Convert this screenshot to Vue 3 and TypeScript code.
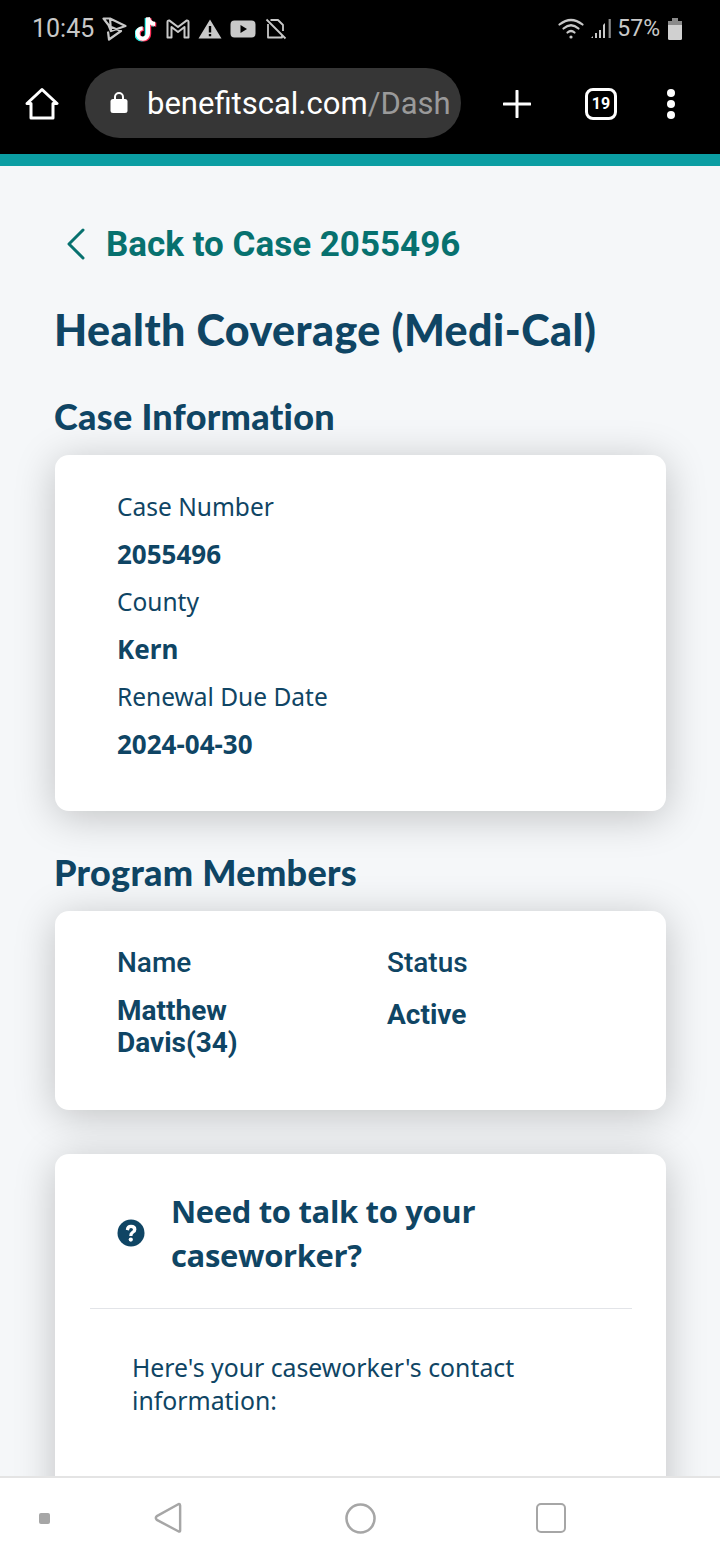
<script setup lang="ts">
const caseRows: { text: string; strong: boolean }[] = [
  { text: 'Case Number', strong: false },
  { text: '2055496', strong: true },
  { text: 'County', strong: false },
  { text: 'Kern', strong: true },
  { text: 'Renewal Due Date', strong: false },
  { text: '2024-04-30', strong: true },
]
</script>

<template>
  <div class="phone">
    <header class="chrome">
      <div class="status">
        <div class="status-left">
          <span class="time">10:45</span>
          <svg class="si" width="25" height="24" viewBox="0 0 25 24" fill="none" stroke="#c8c8c8" stroke-width="2.2" stroke-linejoin="round"><path d="M1.5 1.5 L8 1.5 L23.5 9 L9 14 L6.5 8 Z M8 1.5 L9 14 M8 9.5 L19 14 L7 22.5 L6 14.5"/></svg>
          <svg class="si" width="23" height="28" viewBox="0 0 24 28" fill="none"><g stroke-width="4.4" stroke-linecap="butt" fill="none"><path d="M13.5 2 V18.5 A5.4 5.4 0 1 1 8 13.2" stroke="#25f4ee" transform="translate(-1.2 .8)"/><path d="M13.5 2 C14 6 17 8.5 21 8.6" stroke="#25f4ee" transform="translate(-1.2 .8)"/><path d="M13.5 2 V18.5 A5.4 5.4 0 1 1 8 13.2" stroke="#fe2c55" transform="translate(1.2 .8)"/><path d="M13.5 2 C14 6 17 8.5 21 8.6" stroke="#fe2c55" transform="translate(1.2 .8)"/><path d="M13.5 2 V18.5 A5.4 5.4 0 1 1 8 13.2" stroke="#fff"/><path d="M13.5 2 C14 6 17 8.5 21 8.6" stroke="#fff"/></g></svg>
          <svg class="si" width="24" height="20" viewBox="0 0 24 20" fill="none" stroke="#c8c8c8" stroke-width="2" stroke-linejoin="round"><path d="M1.5 18.5 V3 Q1.5 1.2 3.5 1.6 L12 8 L20.5 1.6 Q22.5 1.2 22.5 3 V18.5 H18.5 V8 L12 13 L5.5 8 V18.5 Z"/></svg>
          <svg class="si" width="24" height="20" viewBox="0 0 24 20"><path fill="#c8c8c8" fill-rule="evenodd" d="M12 0.5 L23.5 19.5 H0.5 Z M10.8 7 V13.5 H13.2 V7 Z M10.8 15 V17.3 H13.2 V15 Z"/></svg>
          <svg class="si" width="26" height="20" viewBox="0 0 26 20"><path fill="#c8c8c8" fill-rule="evenodd" d="M4.5 1.5 H21.5 Q25.5 1.5 25.5 5.5 V14.5 Q25.5 18.5 21.5 18.5 H4.5 Q0.5 18.5 0.5 14.5 V5.5 Q0.5 1.5 4.5 1.5 Z M10.5 6 V14 L17 10 Z"/></svg>
          <svg class="si sim" width="22" height="22" viewBox="0 0 22 22" fill="none" stroke="#c8c8c8" stroke-width="1.8" stroke-linejoin="round"><path d="M3 6 V19.5 H17 V17 M5.5 2 H13 L18 7 V13 M1.5 1.5 L20.5 20.5"/></svg>
        </div>
        <div class="status-right">
          <svg width="26" height="24" viewBox="0 0 26 24" fill="none" stroke="#c8c8c8" stroke-width="2.2" stroke-linecap="round"><path d="M1.5 7.5 Q13 -1.5 24.5 7.5 M5.5 11.5 Q13 5 20.5 11.5 M9.5 15.5 Q13 12.5 16.5 15.5"/><circle cx="13" cy="20" r="1.6" fill="#c8c8c8" stroke="none"/></svg>
          <svg width="22" height="22" viewBox="0 0 22 22" fill="#c8c8c8"><path d="M1 20 L3 18 V20 Z M5 15 H7 V20 H5 Z M9 12 H11 V20 H9 Z M13 7 L15 5 V20 H13 Z" /><rect x="18.6" y="1" width="2.2" height="19" fill="#8a8a8a"/></svg>
          <span class="pct">57%</span>
          <svg width="14" height="22" viewBox="0 0 14 22"><rect x="4" y="0" width="6" height="3" fill="#8a8a8a"/><rect x="0" y="3" width="14" height="4" fill="#8a8a8a"/><path d="M0 7 H14 V20.5 Q14 22 12.5 22 H1.5 Q0 22 0 20.5 Z" fill="#d0d0d0"/></svg>
        </div>
      </div>
      <div class="toolbar">
        <svg class="home" width="34" height="34" viewBox="0 0 34 34" fill="none" stroke="#fff" stroke-width="3" stroke-linejoin="round" stroke-linecap="round"><path d="M2 16.5 L17 2.5 L32 16.5 H28 V31 H6 V16.5 Z"/></svg>
        <div class="urlbar">
          <svg class="lock" width="18" height="23" viewBox="0 0 18 23"><path fill="none" stroke="#fff" stroke-width="2" d="M5 9 V6 A4 4 0 0 1 13 6 V9"/><rect x="0.5" y="8" width="17" height="14" rx="2.5" fill="#fff"/></svg>
          <span class="url">benefitscal.com<span class="url-dim">/Dash</span></span>
        </div>
        <svg class="plus" width="28" height="28" viewBox="0 0 28 28" stroke="#fff" stroke-width="3" stroke-linecap="round"><path d="M14 1 V27 M1 14 H27"/></svg>
        <span class="tabs">19</span>
        <div class="dots"><i></i><i></i><i></i></div>
      </div>
      <div class="teal"></div>
    </header>

    <main class="content">
      <a class="back">
        <svg width="20" height="32" viewBox="0 0 20 32" fill="none" stroke="#07716f" stroke-width="3" stroke-linecap="round" stroke-linejoin="round"><path d="M17 2 L3 16 L17 30"/></svg>
        <span>Back to Case 2055496</span>
      </a>
      <h1>Health Coverage (Medi-Cal)</h1>
      <h2>Case Information</h2>
      <section class="card case-card">
        <p v-for="row in caseRows" :key="row.text" :class="row.strong ? 'val' : 'lab'">{{ row.text }}</p>
      </section>
      <h2 class="members-h">Program Members</h2>
      <section class="card members">
        <div class="col">
          <div class="th">Name</div>
          <div class="td">Matthew<br />Davis(34)</div>
        </div>
        <div class="col">
          <div class="th">Status</div>
          <div class="td active">Active</div>
        </div>
      </section>
      <section class="card help">
        <div class="help-head">
          <svg width="28" height="28" viewBox="0 0 28 28"><circle cx="14" cy="14" r="13.5" fill="#0f4564"/><path d="M8.8 10.8 Q9.2 5.8 14 5.8 Q19.4 5.8 19.4 10.4 Q19.4 12.9 16.9 14.3 Q15.4 15.2 15.4 17 H12.2 Q12.2 14 14.3 12.6 Q16 11.6 16 10.6 Q16 9 14 9 Q12.3 9 12 11.4 Z" fill="#fff"/><circle cx="13.8" cy="20.6" r="2.1" fill="#fff"/></svg>
          <h3>Need to talk to your caseworker?</h3>
        </div>
        <div class="help-body">Here's your caseworker's contact information:</div>
      </section>
    </main>

    <nav class="navbar">
      <span class="recent-dot"></span>
      <svg class="nb" width="28" height="32" viewBox="0 0 30 34" fill="none" stroke="#a6a6a6" stroke-width="2.6" stroke-linejoin="round"><path d="M27 2 Q28 2 28 3.5 V30.5 Q28 32 26.5 31.5 L3 19 Q1 17 3 15 L26 2.2 Z"/></svg>
      <svg class="nc" width="31" height="31" viewBox="0 0 32 32" fill="none" stroke="#a6a6a6" stroke-width="2.6"><circle cx="16" cy="16" r="14.5"/></svg>
      <span class="square"></span>
    </nav>
  </div>
</template>

<style>
html, body { margin: 0; padding: 0; background: #f5f7f9; }
</style>

<style scoped>
.phone { width: 720px; height: 1560px; display: flex; flex-direction: column; overflow: hidden; background: #f5f7f9; }
.chrome { background: #000; flex: none; }
.status { height: 54px; display: flex; justify-content: space-between; align-items: center; padding: 3px 38px 0 32px; box-sizing: border-box; }
.status-left, .status-right { display: flex; align-items: center; }
.status-left { gap: 8px; }
.status-right { gap: 6px; }
.si { flex: none; }
.sim { margin-left: 1px; }
.time, .pct { font-family: Roboto, sans-serif; font-size: 25px; color: #c8c8c8; }
.pct { font-size: 23px; margin-left: -1px; margin-right: 2px; }
.toolbar { height: 100px; display: flex; align-items: center; padding-left: 25px; box-sizing: border-box; padding-bottom: 1px; }
.home, .plus { flex: none; }
.urlbar { flex: none; margin-left: 26px; width: 376px; height: 70px; border-radius: 35px; background: #363636; display: flex; align-items: center; padding-left: 25px; box-sizing: border-box; gap: 19px; margin-top: -2px; overflow: hidden; }
.lock { flex: none; }
.url { font-family: Roboto, sans-serif; font-size: 31px; color: #fff; white-space: nowrap; padding-top: 1px; }
.url-dim { color: #9a9a9a; }
.plus { margin-left: 42px; }
.tabs { flex: none; margin-left: 54px; width: 32px; height: 32px; border: 3px solid #fff; border-radius: 8px; box-sizing: border-box; color: #fff; font-family: Roboto, sans-serif; font-weight: 700; font-size: 16px; display: flex; align-items: center; justify-content: center; }
.dots { margin-left: 50px; display: flex; flex-direction: column; gap: 3px; }
.dots i { display: block; width: 8px; height: 8px; border-radius: 50%; background: #fff; }
.teal { height: 12px; background: #0b9ea3; }
.content { flex: 1; min-height: 0; overflow: hidden; padding: 0 54px 0 55px; box-sizing: border-box; }
.back { display: flex; align-items: center; gap: 20px; margin: 60px 0 0 11px; height: 36px; color: #07716f; font-family: Roboto, sans-serif; font-weight: 700; font-size: 35px; }
.back svg { flex: none; }
h1 { margin: 42px 0 0 -1px; font-family: Lato, sans-serif; font-weight: 900; font-size: 43px; line-height: 52px; color: #0f4564; letter-spacing: 0.45px; white-space: nowrap; }
h2 { margin: 40px 0 0 -1px; font-family: Lato, sans-serif; font-weight: 900; font-size: 36px; line-height: 40px; color: #0f4564; letter-spacing: 0.3px; }
.card { background: #fff; border-radius: 14px; box-shadow: 0 6px 40px rgba(0, 0, 0, 0.22); }
.case-card { margin-top: 19px; height: 356px; box-sizing: border-box; padding: 28px 62px 0; }
.case-card p { margin: 0; height: 47.6px; line-height: 47.6px; color: #0f4564; }
.lab { font-family: "Noto Sans", sans-serif; font-size: 24.5px; }
.val { font-family: "Noto Sans", sans-serif; font-weight: 700; font-size: 26px; }
.members-h { margin-top: 41px; }
.members { margin-top: 19px; height: 199px; box-sizing: border-box; padding: 33px 62px 0; display: flex; font-family: Roboto, sans-serif; color: #0f4564; font-size: 28px; }
.col { flex: none; width: 270px; }
.th { font-weight: 500; line-height: 38px; }
.td { font-weight: 700; line-height: 32px; margin-top: 13px; }
.td.active { margin-top: 17px; }
.help { margin-top: 44px; height: 400px; padding: 0 34px 0 35px; box-sizing: border-box; }
.help-head { display: flex; align-items: center; gap: 26px; padding: 35px 0 31px 27px; border-bottom: 1px solid #e2e4e8; }
.help-head svg { flex: none; }
h3 { margin: 0; font-family: "Open Sans", sans-serif; font-weight: 700; font-size: 31px; line-height: 44px; color: #0f4564; letter-spacing: -0.35px; width: 380px; }
.help-body { padding: 42px 0 0 42px; font-family: "Noto Sans", sans-serif; font-size: 24.8px; line-height: 33px; color: #0f4564; width: 440px; }
.navbar { flex: none; height: 84px; background: #fff; border-top: 2px solid #e4e4e4; box-sizing: border-box; display: flex; align-items: center; padding: 0 0 2px 39px; }
.recent-dot { flex: none; width: 11px; height: 11px; border-radius: 2px; background: #a6a6a6; }
.nb { margin-left: 104px; flex: none; }
.nc { margin-left: 163px; flex: none; }
.square { margin-left: 160px; width: 30px; height: 30px; border: 2.6px solid #a6a6a6; border-radius: 5px; box-sizing: border-box; flex: none; }
</style>
